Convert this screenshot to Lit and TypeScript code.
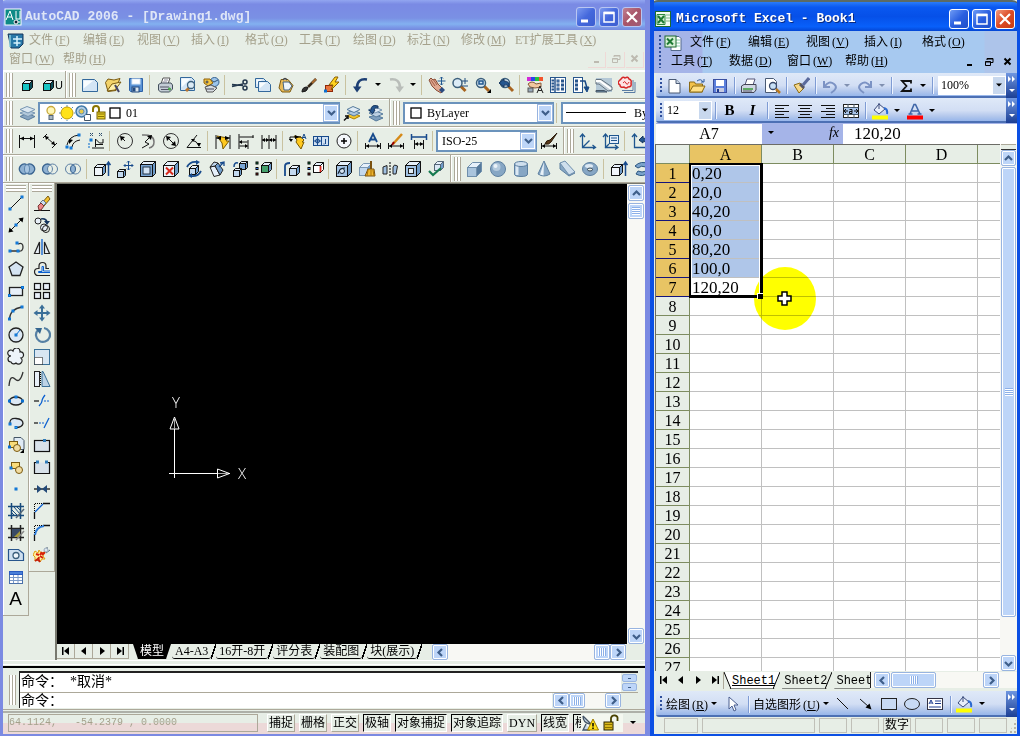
import { LitElement, html, svg, css } from "lit";
import { customElement, property } from "lit/decorators.js";
import { classMap } from "lit/directives/class-map.js";

/* ---------- drawing helpers for the 18x18 icons ---------- */
const P = (d: string, s = "#111", f = "none", w = 1) =>
  svg`<path d="${d}" stroke="${s}" fill="${f}" stroke-width="${w}"></path>`;
const C = (x: number, y: number, r: number, s = "#111", f = "none", w = 1) =>
  svg`<circle cx="${x}" cy="${y}" r="${r}" stroke="${s}" fill="${f}" stroke-width="${w}"></circle>`;
const E = (x: number, y: number, rx: number, ry: number, s = "#111", f = "none", w = 1) =>
  svg`<ellipse cx="${x}" cy="${y}" rx="${rx}" ry="${ry}" stroke="${s}" fill="${f}" stroke-width="${w}"></ellipse>`;
const R = (x: number, y: number, w: number, h: number, s = "#111", f = "none", sw = 1) =>
  svg`<rect x="${x}" y="${y}" width="${w}" height="${h}" stroke="${s}" fill="${f}" stroke-width="${sw}"></rect>`;
const D = (d: string, s = "#111", dash = "1 1") =>
  svg`<path d="${d}" stroke="${s}" fill="none" stroke-dasharray="${dash}"></path>`;
const dot = (x: number, y: number) => R(x - 1, y - 1, 2, 2, "#0a6fd0", "#2e9bf0");
const cube = (x: number, y: number, w: number, d: number, f = "#c3d9ef", s = "#111", side = "#6f9cca") => [
  P(`M${x} ${y + d}l${d} ${-d}h${w}l${-d} ${d}z`, s, "#e6f0fa"),
  P(`M${x + w} ${y + d}l${d} ${-d}v${w}l${-d} ${d}z`, s, side),
  R(x, y + d, w, w, s, f),
];
const sheet = (x: number, y: number, w: number, h: number) => [
  P(`M${x} ${y}h${w - 3}l3 3v${h - 3}h${-w}z`, "#33689c", "#d4e5f5"),
  P(`M${x + 1} ${y + 1}h${w - 5}L${x + 1} ${y + h - 3}z`, "none", "#f8fcff"),
];
const lens = (x: number, y: number) => [
  P(`M${x + 3} ${y + 3}l5 5`, "#a86420", "none", 3),
  C(x, y, 4.5, "#3c5f7c", "#dcebf6", 1.5),
];

const ICONS: Record<string, unknown> = {
  cube: [cube(4.5, 4.5, 7, 3, "#18c4c4", "#111", "#0b4d58")],
  new: [sheet(1.5, 3.5, 15, 12)],
  open: [P("M1.500 6.500L4 3l6 1 6-1.500-3 7-1 5-8 1z", "#7a5a10", "#f3d36a"), P("M3 15L8 8l9-2-6 8z", "#7a5a10", "#fff0a8"), P("M11 9l4 7", "#446", "none", 2)],
  save: [P("M2.500 2.500h13v13h-12l-1-1z", "#2d62a8", "#5b93d4"), R(5, 3, 8, 5, "#dcebf9", "#fff"), R(5, 11, 7, 5, "#234a80", "#dce6ee"), R(6, 12, 2, 3, "#234a80", "#234a80")],
  print: [P("M5 8l2-6h7l-2 6z", "#555", "#fff"), P("M2.500 8.500L5 7h10l1.500 2v4l-3 3h-9l-2-2z", "#44505c", "#c4cdd6"), P("M4 11h9M5 13.500h8", "#556"), P("M8 4h4M7 6h4", "#889"), C(13.500, 13, 1, "#393", "#6c6")],
  preview: [sheet(1.5, 1.5, 14, 13), P("M7 15l4-4", "#b87530", "none", 3), C(12, 9, 3.5, "#3c5f7c", "#dcebf6", 1.3)],
  publish: [C(12.500, 6, 4.500, "#34608f", "#9cc4ea"), P("M9 4l3 2 4-2", "#357", "none"), P("M2 3h6l3 4-5 3-4-3z", "#8c5e08", "#f5c542"), P("M3 11l6-2 6 3-4 4H5z", "#555", "#d8dde2"), P("M4 13h8", "#445"), C(5, 6, 1, "#333", "#fff")],
  cut: [P("M1 8.500l11 1M1 10.500l11-2.500", "#24384e", "none", 1.500), C(14, 6, 2, "#24384e", "none", 1.500), C(14, 12, 2, "#24384e", "none", 1.500)],
  copy: [sheet(1.500, 2.500, 11, 9), sheet(4.500, 5.500, 12, 10)],
  paste: [P("M4 3.500h7l5 6-3 6.500H5L2 12z", "#7d5a12", "#e9bb58"), P("M6 6h6l3 4-3 4H7z", "#44617c", "#eef5fb"), P("M6 4q2-3 4 0", "#444", "#bbb", 1.500)],
  brush: [P("M2 16q0-5 5-5l1 1q-1 4-6 4z", "#181818", "#333"), P("M8 11L16 3", "#3a2a1a", "none", 2.500), P("M12 7l4-4", "#a86a30", "none", 2)],
  bedit: [R(2.500, 9.500, 7, 6, "#8f2708", "#e9733c"), P("M12 1L6 9h4l-2 5 8-8h-4l3-5z", "#8a5f00", "#ffd21f"), dot(2.500, 15)],
  undo: [P("M15 3.500Q5 2 5 12", "#1d3f74", "none", 2.600), P("M1 10.500h8.500L5 16.500z", "none", "#1d3f74")],
  redo: [P("M3 3.500Q13 2 13 12", "#b9bdb9", "none", 2.600), P("M8.500 10.500h8.500l-4.500 6z", "none", "#b9bdb9")],
  pan: [P("M1 4l2-2 2 2 2-1 3 5 6 6-3 3-5-3-4-4z", "#874b36", "#e0a890"), P("M3 4l4 6M5 3l4 6", "#a3614b"), P("M11 14l3-3 3 3-3 3z", "none", "#2a4a80"), P("M13.500 1v8M9.500 5h8M12 2.500l1.500-1.500L15 2.500M12 7.500L13.500 9 15 7.500", "#1f568f")],
  zoomrt: [lens(6.500, 7), P("M11 5h6M14 2v6M11 10h6", "#224f80")],
  zoomwin: [lens(7, 7), R(5, 5, 4, 3, "#1f568f", "#cfe1f2", 1.500), P("M17 13v4h-4z", "none", "#000")],
  zoomprev: [lens(8, 7), P("M2 7l5-4v2q6 0 5 6-1-3-5-2v2z", "#16355e", "#25568f")],
  props: [R(1, 1, 4, 4, "none", "#d22ad8"), R(5, 1, 4, 4, "none", "#2b45e8"), R(9, 1, 4, 4, "none", "#22c23c"), R(13, 1, 4, 4, "none", "#f3542c"), P("M2 8q4-4 8 0l5-1v4l-6 1-5-1z", "#875b3c", "#f0c8a0"), R(2, 12, 5, 4, "#555", "#9ab"), P("M11 17l3-7 3 7M12 14.500h4", "#222")],
  dcenter: [R(1.500, 1.500, 15, 15, "#27558c", "#fff"), P("M6 2v14", "#27558c", "none", 1.500), ...[4, 7, 10, 13].map((y) => R(3, y, 1.500, 1, "#27558c")), ...[4, 8, 12].map((y) => [R(8, y, 2, 2, "#27558c", "#8fb8e4"), R(12.500, y, 2, 2, "#27558c", "#8fb8e4")])],
  palettes: [R(1.500, 1.500, 9, 15, "#27558c", "#fff"), R(3.500, 4, 2, 2, "#27558c"), R(3.500, 8, 2, 2, "#27558c"), R(3.500, 12, 2, 2, "#27558c"), P("M8 5h5l2 7", "#1b4a86", "none", 1.500), P("M12 11h5l-2 5z", "#1b4a86", "#1b4a86")],
  sheetset: [R(1, 2, 16, 14, "none", "#b4c8d6"), P("M1 3.500h5l11 7.500v3l-4 1L4 8H1z", "#647380", "#c5d1da"), P("M1 5h4l11 8", "#fff", "none", 2), P("M1 14.500h8l3 1.500H1z", "#456", "#6d8ea8")],
  markup: [P("M6 16.500h11V6M4 14.500h11V4", "#5a7ca4"), P("M3 3q2-3 4-1 3-2 4 1 3 1 2 4 1 4-3 4-2 2-4 0-4 1-4-2-3-2-1-4z", "#d62828", "#fde4e4", 1.500), P("M5 7q2-3 3 0t3-1", "#d62828")],
  layers: [P("M2 12.500l7-3 8 3-7 3.500z", "#5a7c9c", "#86a4c0"), P("M2 9l7-3 8 3-7 3.500z", "#7695b2", "#b2c8da"), P("M2 5.500L9 2.500l8 3-7 3.500z", "#7695b2", "#dce8f1")],
  layerset: [P("M4 12l6-3 7 3-6 3z", "#b08500", "#f5c62a"), P("M4 9l6-3 7 3-6 3z", "#557a9c", "#a9c4dd"), P("M4 5.500l6-3 7 3-6 3z", "#557a9c", "#dfebf5"), P("M1 16.500l4-4M2 12h3v3", "#111", "none", 1.500)],
  layerprev: [P("M3 13l7-2 7 3-7 3z", "#557a9c", "#7fa0be"), P("M3 9l7-2 7 3-7 3z", "#557a9c", "#bcd0e2"), P("M2 6l7-3 7 3-7 3z", "#7695b2", "#dfebf5"), P("M12 2q-7-2-7 4H3l3.500 4L9 6H8q0-3 4-2z", "#16355e", "#25568f")],
  bulb: [C(9, 6.500, 4, "#c7a93c", "#fff7b8", 1.300), R(7, 11.500, 4, 4, "#567", "#a8b7c4")],
  sun: [D("M3 3l12 12M15 3L3 15M9 1v16M1 9h16", "#5a8cb0", "2 1"), C(9, 9, 6, "#c7a000", "#ffe21a")],
  freeze: [C(7.500, 7.500, 5.500, "#3f78a8", "#b5cfe4", 1.500), C(7.500, 7.500, 2.500, "#5d8db5", "#e6c94a"), P("M12 10.500h4.500v6h-6v-4", "#456", "#fff")],
  lock: [P("M3 8V5q0-3 3-3t3 3v4", "#8b7500", "none", 2), R(7, 8, 8, 7, "#7a6400", "#e6cf2e"), P("M8 10h6M8 12.500h6", "#8b7500")],
  swatch: [R(4, 4, 10, 10, "#000", "#fff", 1.300)],
  dimlin: [P("M1.500 3v13M16.500 3v13M2 6.500h14", "#111"), P("M2 6.500l4-2v4zM16 6.500l-4-2v4z", "none", "#000")],
  dimali: [P("M2 6l4-4M11 16l5-5M4 4l10 9", "#111"), P("M4 4l1 4 3-3zM14 13l-1-4-3 3z", "none", "#000")],
  dimarc: [P("M3 13Q5 4 15 3M8 15q1-6 8-7", "#111"), dot(15, 3), dot(3, 15), dot(7, 16), P("M5 12l0-5 4 1z", "none", "#000")],
  dimord: [P("M5 16h12M8.500 15V7l4 4h3.500V7M8 12.500h8", "#111"), dot(4, 8), D("M3 1l3 3M6 1L3 4M12 1l3 3M15 1l-3 3", "#246", "2 1"), D("M2 11v6", "#06c", "2 1")],
  dimrad: [C(9, 9, 7.500, "#333", "none"), P("M9 9L5 5", "#111"), P("M4 4l5 1-4 4z", "none", "#000")],
  dimjog: [P("M3 3q12-1 12 7 0 5-5 6", "#777", "none", 1.500), P("M3 16l7-4-4-2 6-6", "#111"), P("M13 3l-1 5-4-4z", "none", "#000")],
  dimdia: [C(9, 9, 7.500, "#333", "none"), P("M5 5l8 8", "#111"), P("M4 4l5 1-4 4zM14 14l-5-1 4-4z", "none", "#000")],
  dimang: [P("M16 15.500H2L12 3", "#111"), P("M7 8q5 1 7 6", "#111"), P("M6 7l4 0-2 3zM14 15l-2-4 4 0z", "none", "#000")],
  qdim: [P("M2 3v14M16 3v14M2 6h14", "#111"), P("M3 4l5 1 6 1-2 3h3l-6 8-1-6z", "#7a5a00", "#ffc91f"), P("M2 6l5-2v4zM16 6l-5-2v4z", "none", "#000")],
  dimbase: [P("M2 2v15M2.500 5h14M2.500 10h8M11 8v9M2.500 14h8M16 3v3", "#111"), P("M2 10l3-2v4zM11 14l-3-2v4z", "none", "#000")],
  dimcont: [P("M2 3v14M9 3v14M16 3v14M2 8h14", "#111"), P("M2 8l3-2v4zM9 8L6 6v4zM9 8l3-2v4zM16 8l-3-2v4z", "none", "#000")],
  leader: [P("M5 4l7 1 3 3-2 2h2l-3 7-5-7 1-2z", "#7a5a00", "#ffc91f"), P("M1 8V5h11", "#111"), P("M0 7h4l-2 3zM6 3v4l4-2z", "none", "#000"), P("M13 7l2-5 2 5M13.500 5.500h3", "#174a8c")],
  tol: [R(1.500, 4.500, 15, 9, "#174a8c", "#cfe0f2"), P("M9.500 5v8M2 9h7M5.500 5v8M13.500 7v5M11.500 12h1", "#174a8c"), C(5.500, 9, 2, "#174a8c")],
  center: [C(9, 9, 7, "#222", "#f4f7fb"), P("M9 6v6M6 9h6", "#000", "none", 1.500)],
  dimedit: [P("M1.500 11v6M16.500 11v6M2 14h14", "#111"), P("M5 10L9 2l4 8M6.500 7.500h5", "#174a8c", "none", 1.800), P("M2 14l3-2v4zM16 14l-3-2v4z", "none", "#000")],
  dimtedit: [P("M1.500 11v6M16.500 11v6M2 14h14", "#111"), P("M6 12L15 2", "#d68a18", "none", 2.500), P("M5 13l2-3", "#900", "none", 2), P("M2 14l3-2v4zM16 14l-3-2v4z", "none", "#000")],
  dimupd: [P("M1.500 2v6M16.500 2v6M2 5h14", "#174a8c", "none", 1.500), P("M4.500 8v9M13.500 8v9M5 12h8", "#111"), P("M5 12l3-2v4zM13 12l-3-2v4z", "none", "#000")],
  dimstyle: [P("M1.500 11v6M16.500 11v6M2 14h14", "#111"), P("M5 12q1-4 5-4l7-7-6 9q-2 3-6 2z", "#2a1a0a", "#5b3a1a"), P("M2 14l3-2v4zM16 14l-3-2v4z", "none", "#000")],
  ucs: [P("M3.500 2v13.500H16M3.500 15.500l7-7M1 5l2.500-3L6 5M13.500 13L16.500 15.500 14 17", "#1f568f", "none", 1.300)],
  ucsd: [P("M3.500 2v13.500H15M1 5l2.500-3L6 5M13 13l3 2.500-3 2M3 16l4-4", "#1f568f", "none", 1.300), R(7.500, 3.500, 9, 8, "#1f568f", "#e3eefa"), P("M9 6h6M9 8.500h6", "#1f568f")],
  ucsp: [P("M3.500 2v13.500H16M1 5l2.500-3L6 5", "#1f568f", "none", 1.300), P("M8 8l4-4v2q5 0 4 7-1-4-4-4v2z", "#16355e", "#25568f")],
  union: [P("M9 4.700a5 5 0 1 0 0 8.600a5 5 0 1 0 0-8.600z", "#3a6490", "#8fb1d2", 1.300), E(9, 9, 2.500, 4.300, "#5b84ac", "#a9c6e2")],
  subtract: [C(6.500, 9, 5, "#3a6490", "#8fb1d2", 1.300), C(11.500, 9, 5, "#5b7fa4", "#e7eee6"), P("M9 4.700a5 5 0 0 1 0 8.600", "#5b7fa4")],
  intersect: [C(6.500, 9, 5, "#5b7fa4"), C(11.500, 9, 5, "#5b7fa4"), P("M9 4.700a5 5 0 0 1 0 8.600a5 5 0 0 1 0-8.600z", "#3a6490", "#8fb1d2")],
  extrude: [cube(1.500, 4.500, 8, 3, "#f0f5fa"), P("M15.500 16V3M13.500 5l2-3 2 3", "#174a8c", "none", 1.500)],
  movef: [cube(1.500, 9.500, 6, 2), P("M12.500 1v9M8 5.500h9M11 2.500l1.500-1.500L14 2.500M11 8.500l1.500 1.500L14 8.500M9.500 4L8 5.500 9.500 7M15.500 4L17 5.500 15.500 7", "#174a8c")],
  offset: [cube(1.500, 1.500, 12, 3, "#7ba6d4"), R(4, 7, 7, 7, "#234", "#d3e4f5")],
  delf: [cube(1.500, 1.500, 11, 4, "#eef4fa"), P("M4 7.500l7 7M11 7.500l-7 7", "#d8281c", "none", 2)],
  rotf: [cube(4.500, 5.500, 6, 3), P("M2 7q3-6 10-5M16 11q-3 6-10 5", "#174a8c", "none", 1.800), P("M11 0l4 2-4 3zM7 18l-4-2 4-3z", "none", "#174a8c")],
  taper: [P("M2 7l5-1 5 9-6 1.500z", "#222", "#e6f0fa"), P("M2 7l4-5 4 1-3 3z", "#222", "#c3d9ef"), P("M7 6l3-3 5 7-3 5z", "#222", "#6f9cca"), P("M12 3l4-1v4M11 7l5-5", "#174a8c", "none", 1.300)],
  copyf: [cube(8.500, 1.500, 6, 2, "#7ba6d4"), cube(2.500, 8.500, 6, 2), P("M3 7q0-5 4-4", "#174a8c", "none", 1.500)],
  colorf: [R(2, 2, 2, 2, "#000", "#2b6"), R(2, 7.500, 2, 2, "#000", "#36c"), R(2, 13, 2, 2, "#000", "#c33"), cube(7.500, 2.500, 7, 3, "#44a06c")],
  copye: [P("M2 16V6q0-3 5-3", "#174a8c", "none", 1.800), cube(6.500, 5.500, 7, 3)],
  colore: [R(2, 2, 2, 2, "#000", "#2b6"), R(2, 7.500, 2, 2, "#000", "#36c"), R(2, 13, 2, 2, "#000", "#c33"), cube(7.500, 2.500, 7, 3, "#fff", "#111", "#fff"), P("M14.500 6v6", "#d8281c", "none", 1.800)],
  imprint: [cube(1.500, 1.500, 11, 4, "#a3c3e4"), C(7, 11, 2.500, "#123", "#d8e6f4"), P("M3 14q1-6 7-6", "#123")],
  clean: [cube(1.500, 3.500, 8, 4, "#c3d9ef", "#7c99b4"), P("M13 1v8", "#7a5210", "none", 2), P("M10 9h6l1 7H7z", "#7a5210", "#f0b830"), P("M10 10l-1 6M13 10v6M15 10l1 6", "#a8730c")],
  separate: [P("M2 7v7h4V5.500zM12 7v7h3l1.500-8-3-1z", "#222", "#9fc0e2"), D("M9 2v15", "#000", "2 1")],
  shell: [cube(1.500, 1.500, 11, 4, "#a3c3e4"), R(4.500, 8.500, 5, 5, "#222", "#e3edf7")],
  check: [cube(7.500, 1.500, 6, 3, "#dbe8f5", "#567"), P("M2 11l4 4 8-7", "#167a50", "none", 2.200)],
  box: [cube(1.500, 2.500, 9, 5, "#a9c4dd", "#6f8fac", "#55799c")],
  sphere: [C(9, 9, 7.500, "#5d80a0", "#86a6c4"), C(7.500, 7, 4, "none", "#b4cadd"), C(6.500, 6, 2, "none", "#eaf2f8")],
  cylinder: [P("M2.500 4v10q0 2.500 6.500 2.500t6.500-2.500V4z", "#5d80a0", "#86a6c4"), P("M5 5v10", "#dce9f4", "none", 3), E(9, 4, 6.500, 2.500, "#5d80a0", "#cfdfed")],
  cone: [P("M9 1L3 14q6 4 12 0z", "#5d80a0", "#86a6c4"), P("M9 2L5 14.500l3.500 1z", "none", "#e8f1f8")],
  wedge: [P("M2 3v6l9 7 6-3z", "#5d80a0", "#86a6c4"), P("M2 3l5-2 10 11-6 3z", "#6f8fac", "#cfdfed")],
  torus: [E(9, 9, 7.500, 6.500, "#5d80a0", "#86a6c4"), E(8, 6, 4, 2, "none", "#dce9f4"), E(9, 9.500, 2.500, 1.500, "#345", "#e7eee6")],
  rot3d: [P("M2 6q6-6 14-2l-3 3q-5-2-8 1zM16 12q-6 6-13 2l2-3q4 2 8 0z", "#29557f", "#7ba4cb")],
  cad: [R(1, 1, 16, 16, "#fff", "#0d8a86"), P("M2 12L6 3l3 9M10 14h6M12 3v8h4V3M3 9h5", "#fff"), C(12, 14, 2, "#fff", "#123")],
  dwg: [P("M1 2h15v10l-4 4H4z", "#16365c", "#2878a8"), P("M6 7h9M6.500 11h7M10 4v10", "#d8f4ff", "none", 1.500), P("M3 3v12", "#8cd", "none", 1.500)],
  /* draw toolbar */
  line: [P("M3 15L15 3"), dot(3, 15), dot(15, 3)],
  xline: [P("M2 16L16 2"), P("M1.500 16.500l1-5 4 4zM16.500 1.500l-5 1 4 4z", "none", "#000"), dot(9, 9)],
  pline: [P("M2 13h9M11 6q5-2 5 3t-5 4", "#333", "none", 1.300), dot(3, 13), dot(11, 13), dot(10, 5)],
  polygon: [P("M9 2l7 5-3 8.500H5L2 7z", "#222", "#d5e4f2", 1.300)],
  rect: [R(2.500, 5.500, 13, 8, "#222", "#e8f0f8", 1.300), dot(2.500, 13.500), dot(15.500, 5.500)],
  arc: [P("M2.500 15Q3 5 15 3", "#333", "none", 1.300), dot(2.500, 15), dot(6, 7), dot(15, 3)],
  circle: [C(9, 9, 7, "#222", "#dce8f4", 1.300), P("M9 9l4-5", "#0a6fd0"), dot(9, 9)],
  cloud: [P("M6 3a3 3 0 1 0-2 5a3 3 0 0 0 0 6a3 3 0 0 0 5 1a3.500 3.500 0 1 0 5-5a3 3 0 0 0-1-6a3 3 0 0 0-7-1z", "#222", "#eef4fa", 1.200)],
  spline: [P("M2 16Q3 4 8 9t8-7", "#333", "none", 1.300)],
  ellipse: [E(9, 9, 6.500, 4, "#222", "#dce8f4", 1.300), dot(2.500, 9), dot(15.500, 9), dot(9, 5)],
  earc: [P("M3 10Q2 4 9 4.500t7 5q-1 4-7 4", "#222", "#dce8f4", 1.300), dot(3, 10), dot(9, 13.500)],
  insblk: [P("M7 1.500h7l3 3v9H7z", "#456", "#dfeaf5"), R(2.500, 5.500, 8, 6, "#7a5a10", "#f9dc7a"), C(10, 12, 3.500, "#7a5a10", "#f1dca0"), dot(2.500, 11), P("M17 13v4h-4z", "none", "#000")],
  mkblk: [R(4.500, 4.500, 8, 6, "#7a5a10", "#f9dc7a"), C(12, 12, 3.500, "#7a5a10", "#f1dca0"), dot(4, 10)],
  point: [dot(9, 9)],
  hatch: [P("M4.500 1v16M13.500 1v16M1 4.500h16M1 13.500h16", "#174a7c", "none", 1.500), P("M5 8l5 5M7 5l6 7M5 11l2 2M10 5l3 3", "#174a7c"), P("M9 16l8-9", "#567", "none", 1.500)],
  grad: [P("M4.500 1v16M13.500 1v16M1 4.500h16M1 13.500h16", "#222", "none", 1.500), R(5, 5, 8, 8, "none", "#394a66"), P("M7 13l6-6v6z", "none", "#a89a3a"), P("M9 16l8-9", "#888", "none", 1.500)],
  region: [P("M1.500 3.500h10l5 4v7h-15z", "#27558c", "#cfe0f0", 1.200), C(9, 9.500, 3, "#3c5f7c", "#f0f6fb", 1.300)],
  table: [R(2.500, 3.500, 13, 12, "#4a70a8", "#fff"), R(2.500, 3.500, 13, 3, "#2a5cc0", "#4a80d8"), P("M3 9.500h12M3 12.500h12M6.500 7v8M11 7v8", "#7a9ac8")],
  /* modify toolbar */
  erase: [P("M1 16.500h16", "#111"), P("M8 10l7-8 2 3-6 7z", "#7a5a10", "#f2c230"), P("M7 9l3-3 3 3-3 3z", "#678", "#cde"), P("M5 12l3-3 3 3-3 4H6z", "#733", "#e88")],
  copyo: [C(5, 5, 3, "#222", "#e8f0f8"), C(11, 11.500, 3.500, "#222", "#e8f0f8"), C(13, 13, 3.500, "#222", "none"), P("M8 3q5-1 6 3", "#16355e", "none", 1.500), P("M11 5h6l-3 4z", "none", "#16355e")],
  mirror: [P("M6.500 4v11.500H1.500zM11.500 4v11.500h5z", "#222", "#e8f0f8", 1.200), P("M9 1v16", "#0a5fd0", "none", 1.300)],
  offs: [P("M17 15.500H5a3.500 3.500 0 0 1 0-7h1V6a3.500 3.500 0 0 1 7 0v2.500h3", "#222", "none", 1.200), P("M17 12.500H5.500v-1H9V6.500h1.500v4.500H17", "#0a5fd0", "none", 1)],
  array: [R(1.500, 1.500, 6, 6, "#111", "#e8f0f8", 1.200), R(10.500, 1.500, 6, 6, "#111", "#e8f0f8", 1.200), R(1.500, 10.500, 6, 6, "#111", "#e8f0f8", 1.200), R(10.500, 10.500, 6, 6, "#111", "#e8f0f8", 1.200)],
  move: [P("M9 3v12M3 9h12", "#3a6f98", "none", 2), P("M9 .5l3 4H6zM9 17.500l3-4H6zM.5 9l4-3v6zM17.500 9l-4-3v6z", "none", "#3a6f98")],
  rotate: [P("M5 4a7 7 0 1 0 6-2", "#5580a4", "none", 2.200), P("M2 2h7l-2 6z", "none", "#33658f")],
  scale: [R(1.500, 1.500, 15, 15, "#3a7098", "#d8e6f2"), R(1.500, 9, 8, 7.500, "none", "#fff"), D("M1.500 9.500h8v7h-8z", "#000")],
  stretch: [R(1.500, 1.500, 5, 15, "#222", "#e8f0f8"), D("M7.500 2v14", "#000"), P("M9 1.500h1l7 15H9z", "#3a7098", "#bcd3e6")],
  trim: [P("M1 9h5", "#111", "none", 1.200), P("M6 14Q9 11 9 9t3-6", "#0a5fd0", "none", 1.300), D("M11 9h6", "#0a5fd0", "2 1")],
  extend: [P("M1 9h4", "#111", "none", 1.200), D("M6 9h6", "#0a5fd0", "2 1"), P("M11 14L16 4", "#0a5fd0", "none", 1.300)],
  brkpt: [R(1.500, 4.500, 15, 11, "#111", "#d8e2ea", 1.200), R(10, 3, 3, 3, "none", "#2f7ab8")],
  brk: [P("M4 4.500H1.500v11h15v-11H14", "#111", "#d8e2ea", 1.200), R(3, 2.500, 3, 3, "none", "#2f7ab8"), R(12, 2.500, 3, 3, "none", "#2f7ab8")],
  join: [P("M1 9h16", "#111", "none", 1.300), P("M4 5l5 4-5 4zM14 5l-5 4 5 4z", "none", "#234a78")],
  chamfer: [P("M10 1.500h7M1.500 17v-7", "#111", "none", 1.300), P("M2 10L10 2", "#0a5fd0", "none", 1.300), D("M1.500 9V1.500h7.500", "#000")],
  fillet: [P("M10 1.500h7M1.500 17v-7", "#111", "none", 1.300), P("M2 11Q3 3 11 2", "#2a7ad8", "none", 2), D("M1.500 9V1.500h7.500", "#000")],
  explode: [P("M2 5l3 2 1-3 2 3 4-1-2 4 2 3-3 0-2 3-2-3-3 2 0-4-2-2z", "#e0a010", "#fff0a0"), P("M3 8l3 1M9 6L7 9M10 12l-3-2M5 15l1-4M12 6l-3 3", "#d8200c", "none", 2), P("M2 15l3-2 2 3", "#c4240c", "none", 2), P("M11 5l4-3M13 7l4-3M14 1v3", "#567"), C(13, 4, 2, "#9ab", "#dde6ee")],
  /* status tray */
  dish: [P("M2 2q0 7 7 8M2 2l8 8M5 10l-3 6h7", "#456", "#c8d8e8", 1.300), P("M12 5l5.500 11h-11z", "#9c7a00", "#ffe01a"), P("M12 9v3.500M12 13.500v1.500", "#000", "none", 1.500)],
  unlock: [P("M9 8V4q1-3 4-2.500T15.500 5v2", "#4a4200", "none", 1.800), R(2, 8, 9, 8, "#2a2400", "#d8b81c"), P("M3 10.500h7M3 13.500h7", "#8a7200")],
  /* excel */
  xl: [R(.5, 1.500, 15, 15, "#1e6b30", "#f2faf2"), P("M2 4.500h8l0 10H2z", "#2c8a3c", "#d6efd6"), P("M3 6l6 7M9 6l-6 7", "#1e7a34", "none", 2), P("M11 5h4M11 8h4M11 11h4", "#78b884")],
  xldoc: [P("M7 2.500h8l2 2v12H7z", "#556a8c", "#fff"), P("M12 6h4M12 9h4M12 12h4", "#8ca"), R(1, 2, 11, 11, "#1e6b30", "#d6efd6"), P("M3 4.500l6 6M9 4.500l-6 6", "#1e7a34", "none", 2)],
  xnew: [P("M4 2.500h7l4 4v9.500H4z", "#4a5a74", "#fff"), P("M11 2.500v4h4", "#4a5a74", "#c8d4e4")],
  xopen: [P("M1.500 5h5l1 2h7v8h-13z", "#8a6a14", "#f2c14a"), P("M1.500 15L5 9h12l-3 6z", "#8a6a14", "#ffdf84"), P("M9 4q4-3 6 1M13 5h3V2", "#2c5aa0")],
  xsave: [R(2.500, 2.500, 13, 13, "#3a50a0", "#5c80dc"), R(5, 3, 8, 6, "none", "#fff"), R(5, 11, 8, 4, "none", "#c8cce0"), R(6, 12, 2, 3, "none", "#1f3c90")],
  xprint: [P("M5 8l2-6h8l-2 6z", "#557", "#fff"), P("M1.500 9L4 7.500h12V13l-2 2.500H1.500z", "#445", "#cfd6e2"), P("M3 12h10", "#3a9a3a", "none", 1.500), P("M3 14h9", "#556")],
  xprev: [P("M2.500 1.500h8l3 3v11h-11z", "#4a5a74", "#fff"), C(10, 9, 3.500, "#3a4a6a", "#c8e0f6", 1.300), P("M13 12l4 4", "#b87820", "none", 2.500)],
  painter: [P("M2 8l6-2 4 5-5 5z", "#8a6a14", "#f6d888"), P("M8 7l4 4", "#556", "none", 3), P("M11 8l6-7", "#5a6a9c", "none", 3)],
  xundo: [P("M3 4v6h6M3.500 9.500Q8 3 13 7t-3 9", "#7c93c4", "none", 2)],
  xredo: [P("M15 4v6H9M14.500 9.500Q10 3 5 7t3 9", "#7c93c4", "none", 2)],
  sigma: [P("M14 6.500V4H5L9.500 9 5 14h9v-2.500", "#111", "none", 1.800)],
  al: [P("M2 3.500h14M2 6.500h9M2 9.500h14M2 12.500h9M2 15.500h14")],
  ac: [P("M2 3.500h14M4 6.500h10M2 9.500h14M4 12.500h10M2 15.500h14")],
  ar: [P("M2 3.500h14M7 6.500h9M2 9.500h14M7 12.500h9M2 15.500h14")],
  merge: [R(1.500, 2.500, 15, 13, "#222", "#fff"), P("M1.500 5.500h15M1.500 12.500h15M6 2v3M12 2v3M6 13v3M12 13v3", "#456"), R(2, 6, 14, 6, "none", "#a8c4ec"), P("M2 9h4M12 9h4M4 7l-2 2 2 2M14 7l2 2-2 2"), P("M7.500 7.500h2.500v4H7.500v-2H10")],
  fill: [P("M8 2l6 5-6 5-5-4z", "#3a4a7a", "#e8eefa"), P("M8 1V7", "#3a4a7a"), P("M13 6q4 1 3 6", "#2c6ad0", "none", 2), R(1, 13.500, 16, 4, "none", "#ffff00")],
  fontc: [P("M4 12L8 2.500h1.500l4.500 9.500M6 9h6M2.500 12h4M11.500 12h4", "#3f66a8", "none", 1.600), R(1, 13.500, 16, 4, "none", "#ff0000")],
  arrowc: [P("M5 2v12l3-3 2 5 2-1-2-5h4z", "#4a5f90", "#fff")],
  sline: [P("M3 3l11 11")],
  sarrow: [P("M3 4l9 8"), P("M14.500 14.500l-6-2 4-4z", "none", "#000")],
  srect: [R(1.500, 3.500, 15, 11, "#222", "#c8daf4")],
  sell: [E(9, 9, 7.500, 5.500, "#222", "#c8daf4")],
  stext: [R(1.500, 3.500, 15, 11, "#334", "#fff"), P("M3 9l2-4 2 4M4 8h2M9 6h6M9 8.500h6M3 12h12", "#1f3c90")],
};

const icon = (name: string) =>
  html`<svg class="i" viewBox="0 0 18 18" width="18" height="18" fill="none" aria-hidden="true">${ICONS[name]}</svg>`;
const tool = (name: string, cls = "") =>
  html`<button class="tool ${cls}" aria-label=${name}>${icon(name)}</button>`;
const SEP = html`<i class="sep"></i>`;
const GRIP = html`<i class="grip"></i>`;
const tools = (list: string) =>
  list.split(" ").map((n) => (n === "|" ? SEP : n === "v" ? html`<button class="drop" aria-label="more">${tri("down")}</button>` : tool(n)));
const TRI: Record<string, string> = {
  down: "M1 2h6L4 5z", left: "M6 0v8L1 4z", right: "M2 0v8l5-4z",
  first: "M0 0h1.500v8H0zM7 0v8L2 4z", last: "M1 0v8l5-4zM6.500 0H8v8H6.500z",
};
const tri = (k: string) =>
  html`<svg class="tri" viewBox="0 0 8 8" width="8" height="8" aria-hidden="true"><path d=${TRI[k]} fill="currentColor"></path></svg>`;
const CHEV: Record<string, string> = {
  up: "M2 7l3.500-3.500L9 7", down: "M2 4l3.500 3.500L9 4", left: "M7 2L3.500 5.500 7 9", right: "M4 2l3.500 3.500L4 9",
};
const chev = (k: string) =>
  html`<button class="sbtn" aria-label=${k}><svg viewBox="0 0 11 11" width="11" height="11"><path d=${CHEV[k]} fill="none" stroke="#3f5f8a" stroke-width="2.200"></path></svg></button>`;
const menuItem = (m: string) => {
  const [label, key] = m.split("|");
  return html`<button class="menu">${label}<span class="key">(<u>${key}</u>)</span></button>`;
};
const winBtns = html`<div class="winbtns">
  <button class="wb" aria-label="Minimize"><svg viewBox="0 0 16 16" width="16" height="16"><path d="M3 12h7" stroke="#fff" stroke-width="3"></path></svg></button>
  <button class="wb" aria-label="Maximize"><svg viewBox="0 0 16 16" width="16" height="16"><path d="M3 3.500h10v9.500H3z" fill="none" stroke="#fff" stroke-width="1.500"></path><path d="M3 4h10" stroke="#fff" stroke-width="2.500"></path></svg></button>
  <button class="wb close" aria-label="Close"><svg viewBox="0 0 16 16" width="16" height="16"><path d="M3 3l10 10M13 3L3 13" stroke="#fff" stroke-width="2.200"></path></svg></button>
</div>`;
const mdiBtns = html`<div class="mdi">
  <button aria-label="Minimize document"><svg viewBox="0 0 10 10" width="10" height="10"><path d="M2 8h5" stroke="currentColor" stroke-width="2"></path></svg></button>
  <button aria-label="Restore document"><svg viewBox="0 0 10 10" width="10" height="10"><path d="M3 3V1.500h6v4H7M1.500 4.500h5v4h-5zM1.500 5h5M3 2h6" fill="none" stroke="currentColor"></path></svg></button>
  <button aria-label="Close document"><svg viewBox="0 0 10 10" width="10" height="10"><path d="M1.500 1.500l6 6M7.500 1.500l-6 6" stroke="currentColor" stroke-width="2"></path></svg></button>
</div>`;

const shared = css`
  * { box-sizing: border-box; }
  :host {
    display: flex; flex-direction: column; min-width: 0; min-height: 0; overflow: hidden;
    font: 12px "Liberation Serif", "Noto Sans CJK SC", serif; color: #000;
  }
  button, input, select { font: inherit; color: inherit; margin: 0; padding: 0; border: 0; background: none; border-radius: 0; min-width: 0; }
  select { appearance: none; }
  .i, .tri { display: block; flex: none; }
  .tool { flex: none; width: 23px; height: 22px; display: flex; align-items: center; justify-content: center; }
  .drop { flex: none; width: 12px; height: 22px; display: flex; align-items: center; justify-content: center; }
  .title { display: flex; align-items: center; flex: none; height: 30px; font: bold 13px "Liberation Mono", monospace; white-space: nowrap; }
  .title .i { margin-right: 3px; }
  .winbtns { margin-left: auto; display: flex; gap: 3px; }
  .wb { width: 20px; height: 20px; border: 1px solid #fff; border-radius: 3px; display: flex; align-items: center; justify-content: center; background: linear-gradient(135deg, #6f9bf5, #2a5fe0 50%, #1e4fc8); }
  .menus { display: flex; flex-wrap: wrap; flex: 1; align-items: center; }
  .menu { height: 19px; line-height: 19px; text-align: left; white-space: nowrap; }
  .key { margin-left: 2px; }
  .mdi { margin-left: auto; display: flex; }
  .mdi button { height: 16px; display: flex; align-items: center; justify-content: center; }
  .sbtn, .thumb { flex: none; width: 16px; height: 16px; border: 1px solid #98b4e0; border-radius: 2px; box-shadow: inset 0 0 0 1px #fff; background: #bdd5f8; display: flex; align-items: center; justify-content: center; }
  .grab { width: 8px; height: 8px; background: repeating-linear-gradient(90deg, #fff 0 1px, #8cb0e8 1px 2px); }
  .grab.h { background: repeating-linear-gradient(0deg, #fff 0 1px, #8cb0e8 1px 2px); }
  .track { background: #f8f8f4; display: flex; }
  .track.v { flex-direction: column; }
  .spring { flex: 1; }
`;

@customElement("cad-window")
export class CadWindow extends LitElement {
  static styles = [shared, css`
    :host { background: #e7eee6; border: solid #7b8ae2; border-width: 0 5px 2px 3px; }
    .title { margin: 0 -5px 0 -3px; padding: 3px 8px 0 4px; color: #dfe6f7; border-radius: 6px 6px 0 0; background: linear-gradient(#92a6f0, #7a8ae4 14%, #7a90e4 60%, #83b1f0 80%, #7b9ae8 90%, #7488de); }
    .wb { border-color: #b9c6f2; background: linear-gradient(135deg, #7c9af0, #4468dc 50%, #3c5ed0); }
    .wb.close { background: linear-gradient(135deg, #c08090, #a85468 50%, #a05c78); }
    .menubar { display: flex; flex: none; padding: 1px 0 1px; color: #a5a18c; border-bottom: 1px solid #fff; }
    .menus > .i { margin: 0 -2px 0 4px; }
    .menu { width: 54px; padding-left: 6px; }
    .menu:nth-of-type(10) { width: 84px; }
    .mdi { margin-right: 1px; gap: 1px; color: #bdbab0; }
    .mdi button { width: 18px; border: solid #efd9d6; border-width: 0 1px 1px 0; }
    .row { display: flex; flex: none; height: 28px; border-bottom: 1px solid #aca899; overflow: hidden; }
    .bar { display: flex; align-items: center; flex: none; padding-right: 3px; border: solid #aca899; border-width: 0 1px 0 0; box-shadow: inset 1px 1px #fff; }
    .bar:last-child { border-right: 0; flex: 1 0 0; min-width: 0; overflow: hidden; }
    .grip { flex: none; width: 7px; height: 24px; margin: 0 2px 0 3px; border: solid #aca899; border-width: 0 1px; background: linear-gradient(90deg, #fff 2px, #aca899 2px 3px, #fff 3px); }
    .sep { flex: none; width: 1px; height: 20px; margin: 0 3px 0 2px; background: #c9c2a0; }
    .unamed { display: flex; align-items: center; width: 26px; margin-left: 1px; font: 11px "Liberation Sans", sans-serif; }
    .unamed .i { margin-right: -2px; }
    .first { padding-right: 0; }
    .combo { display: flex; align-items: center; height: 22px; border: 2px solid #6b93bc; border-right-width: 1px; background: #fff; overflow: hidden; flex: none; }
    .combo select { flex: 1; height: 18px; padding-left: 4px; }
    .combo .sbtn { border-radius: 0; height: 18px; pointer-events: none; }
    .combo .i { margin-right: -2px; }
    .layer { width: 302px; padding-left: 2px; }
    .layer select { padding-left: 4px; }
    .color { width: 151px; margin-left: 1px; padding-left: 2px; }
    .style { width: 101px; }
    .ltype { width: 180px; margin-left: 1px; gap: 4px; padding-left: 3px; }
    .ltype hr { width: 60px; border: 0; border-top: 1px solid #000; margin: 0; flex: none; }
    .work { flex: 1; min-height: 0; display: flex; }
    .side { flex: none; align-self: flex-start; width: 26px; padding: 2px 0 5px; border: solid #aca899; border-width: 0 1px 1px 0; box-shadow: inset 1px 1px #fff; display: flex; flex-direction: column; align-items: center; }
    .side .tool { width: 24px; height: 22px; }
    .side .hgrip { width: 20px; height: 7px; border: solid #aca899; border-width: 1px 0; background: linear-gradient(#fff 2px, #aca899 2px 3px, #fff 3px); }
    .letter { font: 19px "Liberation Sans", sans-serif; }
    .main { flex: 1; min-width: 0; display: flex; flex-direction: column; border-left: 2px solid #77786e; border-top: 1px solid #77786e; }
    .view { flex: 1; min-height: 0; display: flex; }
    .canvas { flex: 1; background: #000; position: relative; overflow: hidden; }
    .ucs { position: absolute; left: 111px; bottom: 160px; display: block; }
    .ucs text { font: 15px "Open Sans", sans-serif; font-weight: 300; fill: #fff; }
    .vs { width: 18px; padding: 1px 1px 0; }
    .vs .thumb { margin-top: 2px; }
    .tabs { display: flex; flex: none; height: 16px; background: #e7eee6; }
    .nav { flex: none; width: 18px; height: 15px; display: flex; align-items: center; justify-content: center; border: solid #aca899; border-width: 0 1px 1px 0; }
    .tab { height: 15px; line-height: 14px; padding: 0 3px; flex: none; border-bottom: 1px solid #000; border-radius: 0 0 3px 3px; white-space: nowrap; }
    .tab.on { background: #000; color: #fff; padding: 0; margin: 0 1px 0 4px; clip-path: polygon(0 0, 100% 0, calc(100% - 5px) 100%, 5px 100%); width: 38px; }
    .slash { flex: none; width: 5px; height: 15px; background: linear-gradient(to bottom right, transparent 42%, #000 42% 58%, transparent 58%); }
    .hs { margin-left: 10px; flex: 1; margin-right: 19px; }
    .split { flex: none; height: 8px; border-top: 1px solid #fff; border-bottom: 2px solid #000; background: linear-gradient(#e7eee6 3px, #fff 3px 4px, #e7eee6 4px); }
    .cmd { flex: none; display: flex; padding: 3px 7px 1px 4px; border-bottom: 1px solid #aca899; }
    .cmd .grip { height: 30px; margin: 4px 3px 0 2px; }
    .box { flex: 1; border: solid #222; border-width: 2px 0 0 1px; font-size: 14px; }
    .hist { display: flex; height: 20px; background: #fff; border-bottom: 1px solid #aca899; line-height: 18px; }
    .hist output { flex: 1; padding-left: 1px; white-space: pre; }
    .spin { display: flex; flex-direction: column; gap: 1px; width: 17px; background: #e7eee6; padding: 1px; }
    .spin button { flex: 1; border: 1px solid #98b4e0; border-radius: 2px; background: #bdd5f8; display: flex; align-items: center; justify-content: center; }
    .spin i { width: 3px; height: 1px; background: #3f5f8a; }
    .prompt { display: flex; height: 15px; }
    .prompt label { background: #fff; padding-left: 1px; line-height: 15px; }
    .prompt input { flex: 1; background: #fff; }
    .prompt .track { width: 68px; margin: 0 17px 0 1px; }
    .prompt .sbtn, .prompt .thumb { height: 15px; }
    .status { flex: none; display: flex; align-items: center; height: 23px; margin-top: 1px; padding: 0 2px 0 5px; background: linear-gradient(#aeb0a8 2px, #e7eee6 2px 12px, #ecd9d8 12px); overflow: hidden; }
    .coord { flex: none; width: 250px; height: 18px; border: 1px solid #aca899; color: #a5a18c; font: 10px/16px "Liberation Mono", monospace; white-space: pre; margin-right: 9px; }
    .st { flex: none; height: 18px; line-height: 16px; margin-right: 4px; padding: 0 1px; border: 1px solid #fff; border-right-color: #aca899; border-bottom-color: #aca899; background: #e7eee6; white-space: nowrap; }
    .st.on { border-color: #000 #fff #fff #000; }
    .cut { width: 8px; overflow: hidden; margin: 0; border-right: 0; }
    .tray { flex: none; display: flex; gap: 3px; width: 42px; height: 18px; background: #f4f8f0; }
    .status .drop { width: 20px; }
    .size { margin-left: auto; align-self: flex-end; width: 10px; height: 10px; background: radial-gradient(#c8b8b0 1px, transparent 1px) 0 0 / 4px 4px; clip-path: polygon(100% 0, 100% 100%, 0 100%); }
  `];

  render() {
    const menus = ["文件|F", "编辑|E", "视图|V", "插入|I", "格式|O", "工具|T", "绘图|D", "标注|N", "修改|M", "ET扩展工具|X", "窗口|W", "帮助|H"];
    const tabs = ["A4-A3", "16开-8开", "评分表", "装配图", "块(展示)"];
    const snaps: [string, boolean][] = [["捕捉", false], ["栅格", false], ["正交", false], ["极轴", true], ["对象捕捉", true], ["对象追踪", true], ["DYN", false], ["线宽", true]];
    return html`
      <header class="title">${icon("cad")}<span>AutoCAD 2006 - [Drawing1.dwg]</span>${winBtns}</header>
      <nav class="menubar"><div class="menus">${icon("dwg")}${menus.map(menuItem)}${mdiBtns}</div></nav>
      <div class="row">
        <div class="bar first">${GRIP}${tool("cube")}
          <button class="unamed">${icon("cube")}U</button></div>
        <div class="bar">${GRIP}${tools("new open save | print preview publish | cut copy paste brush bedit | undo v redo v | pan zoomrt zoomwin zoomprev | props dcenter palettes sheetset markup")}</div>
      </div>
      <div class="row">
        <div class="bar">${GRIP}${tool("layers")}
          <div class="combo layer">${["bulb", "sun", "freeze", "lock", "swatch"].map(icon)}
            <select aria-label="Layer"><option>01</option></select>${chev("down")}</div>
          ${tools("layerset layerprev")}</div>
        <div class="bar">${GRIP}
          <div class="combo color">${icon("swatch")}<select aria-label="Color"><option>ByLayer</option></select>${chev("down")}</div>
          ${SEP}
          <div class="combo ltype"><hr /><select aria-label="Linetype"><option>ByLayer</option></select>${chev("down")}</div>
        </div>
      </div>
      <div class="row">
        <div class="bar">${GRIP}${tools("dimlin dimali dimarc dimord | dimrad dimjog dimdia dimang | qdim dimbase dimcont | leader tol center | dimedit dimtedit dimupd |")}
          <div class="combo style"><select aria-label="Dimension style"><option>ISO-25</option></select>${chev("down")}</div>
          ${tool("dimstyle")}</div>
        <div class="bar">${GRIP}${tools("ucs ucsd | ucsp")}</div>
      </div>
      <div class="row">
        <div class="bar">${GRIP}${tools("union subtract intersect | extrude movef offset delf rotf taper copyf colorf | copye colore | imprint clean separate shell check")}</div>
        <div class="bar">${GRIP}${tools("box sphere cylinder cone wedge torus | extrude rot3d")}</div>
      </div>
      <div class="work">
        <div class="side"><i class="hgrip"></i>${tools("line xline pline polygon rect arc circle cloud spline ellipse earc insblk mkblk point hatch grad region table")}
          <button class="tool letter">A</button></div>
        <div class="side"><i class="hgrip"></i>${tools("erase copyo mirror offs array move rotate scale stretch trim extend brkpt brk join chamfer fillet explode")}</div>
        <div class="main">
          <div class="view">
            <div class="canvas">
              <svg class="ucs" viewBox="0 0 90 90" width="90" height="90" fill="none" stroke="#fff">
                <path d="M6.500 84V26M1 79.500H62M6.500 23l-4.500 12h9zM61.500 79.500l-12-4.500v9z"></path>
                <path d="M6.500 25v10M60 79.500H50" stroke="#aaa"></path>
                <text x="4" y="14" stroke="none">Y</text><text x="70" y="85" stroke="none">X</text>
              </svg>
            </div>
            <div class="track v vs">${chev("up")}<div class="thumb"><i class="grab h"></i></div><i class="spring"></i>${chev("down")}</div>
          </div>
          <div class="tabs">
            ${["first", "left", "right", "last"].map((k) => html`<button class="nav" aria-label=${k}>${tri(k)}</button>`)}
            <button class="tab on">模型</button>
            ${tabs.map((t) => html`<button class="tab">${t}</button><i class="slash"></i>`)}
            <div class="track hs">${chev("left")}<i class="spring"></i><div class="thumb"><i class="grab"></i></div>${chev("right")}</div>
          </div>
        </div>
      </div>
      <div class="split"></div>
      <div class="cmd">${GRIP}
        <div class="box">
          <div class="hist"><output>命令：  *取消*</output><div class="spin"><button aria-label="up"><i></i></button><button aria-label="down"><i></i></button></div></div>
          <div class="prompt"><label for="cmd">命令：</label><input id="cmd" />
            <div class="track">${chev("left")}<div class="thumb"><i class="grab"></i></div><i class="spring"></i>${chev("right")}</div></div>
        </div>
      </div>
      <footer class="status">
        <output class="coord">64.1124,   -54.2379 , 0.0000</output>
        ${snaps.map(([t, on]) => html`<button class=${classMap({ st: true, on })} aria-pressed=${on}>${t}</button>`)}
        <button class="st on cut">模型</button>
        <div class="tray">${icon("dish")}${icon("unlock")}</div>
        <button class="drop" aria-label="Status menu">${tri("down")}</button><i class="size"></i>
      </footer>`;
  }
}

@customElement("excel-window")
export class ExcelWindow extends LitElement {
  @property({ attribute: false }) values = ["0,20", "20,0", "40,20", "60,0", "80,20", "100,0", "120,20"];

  static styles = [shared, css`
    :host { background: #e7eee6; border: solid #0c50e4; border-width: 0 3px 2px 4px; }
    .title { height: 31px; padding: 4px 5px 0 5px; margin: 0 -3px 0 -4px; color: #fff; text-shadow: 1px 1px #0a2a80; border-top: 2px solid #5c6a64; border-radius: 8px 8px 0 0; background: linear-gradient(#2a7cf8, #0a58f0 18%, #0650e8 50%, #0860fa 85%, #0446d4); }
    .wb.close { background: linear-gradient(135deg, #f09a80, #dc4a24 50%, #c83c14); }
    .dots { flex: none; width: 2px; margin: 4px 4px 4px 5px; background: repeating-linear-gradient(#2e4f9c 0 2px, transparent 2px 4px); }
    .menubar { display: flex; flex: none; height: 42px; padding-top: 2px; background: linear-gradient(90deg, #a5b4e8 48px, #a7c9f0 49px 330px, #adc4ea 331px); }
    .menus { align-content: flex-start; }
    .menubar .dots { margin: 2px 3px 5px 5px; }
    .menus > .i { margin-right: 1px; }
    .menu { width: 58px; padding-left: 7px; }
    .mdi { margin-right: 0; }
    .mdi button { width: 19px; }
    .bar { display: flex; align-items: center; flex: none; height: 25px; background: linear-gradient(#dfe9f8, #d2def4 50%, #b4c8ec 72%, #94b4ea 94%, #4c70b4 94%); margin-left: 2px; border-radius: 3px 0 0 3px; overflow: hidden; }
    .bar .dots { height: 16px; margin: 0 0 0 4px; }
    .sep { flex: none; width: 1px; height: 17px; margin: 0 2px 0 3px; background: #7f9cd4; box-shadow: 1px 0 #eef4ff; }
    .combo { display: flex; flex: none; height: 19px; background: #fff; align-items: center; margin: 0 0 1px 3px; }
    .combo select { flex: 1; padding-left: 3px; align-self: stretch; }
    .combo .tri { width: 12px; height: 17px; padding: 0 2px; margin-right: 1px; background: #c8d8ee; }
    .zoom { width: 68px; }
    .size { width: 48px; margin-left: 2px; }
    .grey { display: contents; color: #8090b0; }
    .b { font: bold 15px "Liberation Serif", serif; }
    .it { font: italic bold 15px "Liberation Serif", serif; }
    .more { margin-left: auto; align-self: stretch; width: 11px; flex: none; display: flex; flex-direction: column; align-items: center; justify-content: space-between; padding: 3px 0; background: linear-gradient(#6f96e0, #1c3f94); color: #fff; }
    .formula { display: flex; flex: none; height: 21px; padding-top: 1px; margin-left: 2px; background: #a5b4e8; }
    .name { width: 106px; background: #fff; text-align: center; font-size: 16px; }
    .fx { flex: 1 0 81px; max-width: 81px; display: flex; align-items: center; justify-content: space-between; padding: 0 4px 2px 5px; font: italic 14px "Liberation Serif", serif; }
    .value { flex: 1; background: #fff; padding-left: 11px; font-size: 17px; }
    .pane { flex: 1; min-height: 0; display: flex; margin-left: 1px; }
    .grid { flex: 1; min-width: 0; position: relative; overflow: hidden; background: #fff; border: solid #6c6c66; border-width: 1px 0 0 1px; }
    table { table-layout: fixed; width: 394px; border-collapse: separate; border-spacing: 0; font-size: 17px; }
    .rh { width: 34px; }
    .ch { width: 72px; }
    th, td { height: 19px; padding: 2px 0 0; border: solid #c0c0c0; border-width: 0 1px 1px 0; line-height: 16px; overflow: hidden; white-space: nowrap; }
    th { background: #e7eee6; border-color: #7d8c60; font-weight: normal; font-size: 16px; }
    th.on { background: #e8c464; border-bottom-color: #14147c; }
    td { padding-left: 2px; }
    td.on { background: #afc6e9; }
    .range { position: absolute; left: 33px; top: 18px; width: 74px; height: 135px; border: solid #000; border-width: 2px 3px 3px 2px; box-shadow: inset 1px 1px #fff, inset -1px 0 #fff; pointer-events: none; }
    .handle { position: absolute; right: -3px; bottom: -4px; width: 6px; height: 6px; background: #000; border: solid #fff; border-width: 1px 0 0 1px; }
    .spot { position: absolute; left: 98px; top: 122px; width: 62px; height: 63px; border-radius: 50%; background: #ff0; mix-blend-mode: multiply; }
    .cross { position: absolute; left: 121px; top: 146px; }
    .vs { width: 17px; padding: 0 1px; }
    .vs .split { height: 6px; background: #e7eee6; border-bottom: 1px solid #333; border-top: 1px solid #aca899; }
    .vs .sbtn { width: 15px; }
    .vs .thumb { width: 15px; flex: 0 1 450px; margin-top: 1px; }
    .tabs { flex: none; display: flex; height: 18px; align-items: center; font: 12px "Liberation Mono", monospace; margin-left: 1px; overflow: hidden; }
    .nav { flex: none; width: 17px; height: 17px; display: flex; align-items: center; justify-content: center; }
    .sheets { width: 146px; flex: 1 0 146px; display: flex; overflow: hidden; border-left: 1px solid #aca899; }
    .tab { flex: none; height: 17px; padding: 2px 5px 0 8px; border-bottom: 1px solid #222; clip-path: polygon(0 0, 100% 0, calc(100% - 6px) 100%, 6px 100%); }
    .tab.on { background: #fff; text-decoration: underline; }
    .edge { flex: none; width: 7px; height: 17px; margin: 0 -4px 0 -7px; position: relative; z-index: 1; }
    .edge.first { margin: 0 -7px 0 0; }
    .hs { width: 147px; flex: none; border-left: 1px solid #222; padding-left: 3px; padding-right: 18px; }
    .hs .thumb { width: 45px; margin-left: 1px; }
    .draw { height: 28px; border-top: 2px solid #e7eee6; }
    .draw .dots { margin-right: 2px; }
    .txt { flex: none; padding: 0 0 0 2px; white-space: nowrap; }
    .draw .tool.cur { width: 25px; }
    .status { display: flex; flex: none; height: 17px; gap: 4px; padding: 1px 0 1px 10px; align-items: stretch; }
    .cell { flex: 0 0 28px; border: 1px solid #c0c0b8; text-align: center; line-height: 13px; }
    .cell.a { flex-basis: 34px; }
    .cell.w { flex: 1 1 112px; }
    .corner { width: 8px; margin-left: -2px; background: radial-gradient(#b8b4a4 1px, transparent 1px) 0 0 / 4px 4px; clip-path: polygon(100% 0, 100% 100%, 0 100%); }
  `];

  render() {
    const menus = ["文件|F", "编辑|E", "视图|V", "插入|I", "格式|O", "工具|T", "数据|D", "窗口|W", "帮助|H"];
    const n = this.values.length;
    const edge = (first = false) => html`<svg class="edge ${first ? "first" : ""}" viewBox="0 0 7 17" width="7" height="17"><path d=${first ? "M0 0l7 17" : "M7 0L0 17"} stroke="#000"></path></svg>`;
    const more = html`<button class="more" aria-label="Toolbar options"><svg viewBox="0 0 9 6" width="9" height="6"><path d="M1 0l3 3-3 3zM5 0l3 3-3 3z" fill="#fff"></path></svg>${tri("down")}</button>`;
    return html`
      <header class="title">${icon("xl")}<span>Microsoft Excel - Book1</span>${winBtns}</header>
      <nav class="menubar"><i class="dots"></i><div class="menus">${icon("xldoc")}${menus.map(menuItem)}${mdiBtns}</div></nav>
      <div class="bar"><i class="dots"></i>${tools("xnew xopen xsave | xprint xprev | painter |")}
        <span class="grey">${tools("xundo v xredo v")}</span>${tools("| sigma v |")}
        <div class="combo zoom"><select aria-label="Zoom"><option>100%</option></select>${tri("down")}</div>${more}</div>
      <div class="bar"><i class="dots"></i>
        <div class="combo size"><select aria-label="Font size"><option>12</option></select>${tri("down")}</div>
        ${SEP}<button class="tool b">B</button><button class="tool it">I</button>
        ${tools("| al ac ar merge | fill v fontc v")}${more}</div>
      <div class="formula">
        <input class="name" aria-label="Name box" value="A7" />
        <div class="fx">${tri("down")}<span>fx</span></div>
        <input class="value" aria-label="Formula" value="120,20" />
      </div>
      <div class="pane">
        <div class="grid">
          <table>
            <colgroup><col class="rh" />${[1, 2, 3, 4, 5].map(() => html`<col class="ch" />`)}</colgroup>
            <thead><tr><th></th>${["A", "B", "C", "D", ""].map((c) => html`<th class=${classMap({ on: c === "A" })}>${c}</th>`)}</tr></thead>
            <tbody>${Array.from({ length: 27 }, (_, r) => html`<tr>
              <th class=${classMap({ on: r < n })}>${r + 1}</th>
              ${[0, 1, 2, 3, 4].map((c) => html`<td class=${classMap({ on: c === 0 && r < n - 1 })}>${c === 0 ? this.values[r] ?? "" : ""}</td>`)}
            </tr>`)}</tbody>
          </table>
          <div class="spot"></div>
          <div class="range"><i class="handle"></i></div>
          <svg class="cross" viewBox="0 0 16 16" width="16" height="16"><path d="M5 1h5v4h4v5h-4v4H5v-4H1V5h4z" fill="#fff" stroke="#000" stroke-width="1.500"></path></svg>
        </div>
        <div class="track v vs"><i class="split"></i>${chev("up")}<div class="thumb"><i class="grab h"></i></div><i class="spring"></i>${chev("down")}</div>
      </div>
      <div class="tabs">
        ${["first", "left", "right", "last"].map((k) => html`<button class="nav" aria-label=${k}>${tri(k)}</button>`)}
        <div class="sheets">${edge(true)}<button class="tab on">Sheet1</button>${edge()}<button class="tab">Sheet2</button>${edge()}<button class="tab">Sheet3</button></div>
        <div class="track hs">${chev("left")}<div class="thumb"><i class="grab"></i></div><i class="spring"></i>${chev("right")}</div>
      </div>
      <div class="bar draw"><i class="dots"></i><button class="txt">绘图<span class="key">(<u>R</u>)</span></button>
        ${tools("v")}${tool("arrowc", "cur")}${SEP}<button class="txt">自选图形<span class="key">(<u>U</u>)</span></button>
        ${tools("v sline sarrow srect sell stext | fill v")}${more}</div>
      <footer class="status"><span class="cell a"></span><span class="cell w"></span><span class="cell"></span><span class="cell"></span>
        <output class="cell">数字</output><span class="cell"></span><span class="cell"></span><span class="cell"></span><i class="corner"></i></footer>`;
  }
}

@customElement("app-root")
export class AppRoot extends LitElement {
  static styles = css`
    :host { display: grid; grid-template-columns: minmax(0, 65fr) minmax(0, 37fr); height: 100vh; background: #4c6a58; }
  `;
  render() {
    return html`<cad-window></cad-window><excel-window></excel-window>`;
  }
}
